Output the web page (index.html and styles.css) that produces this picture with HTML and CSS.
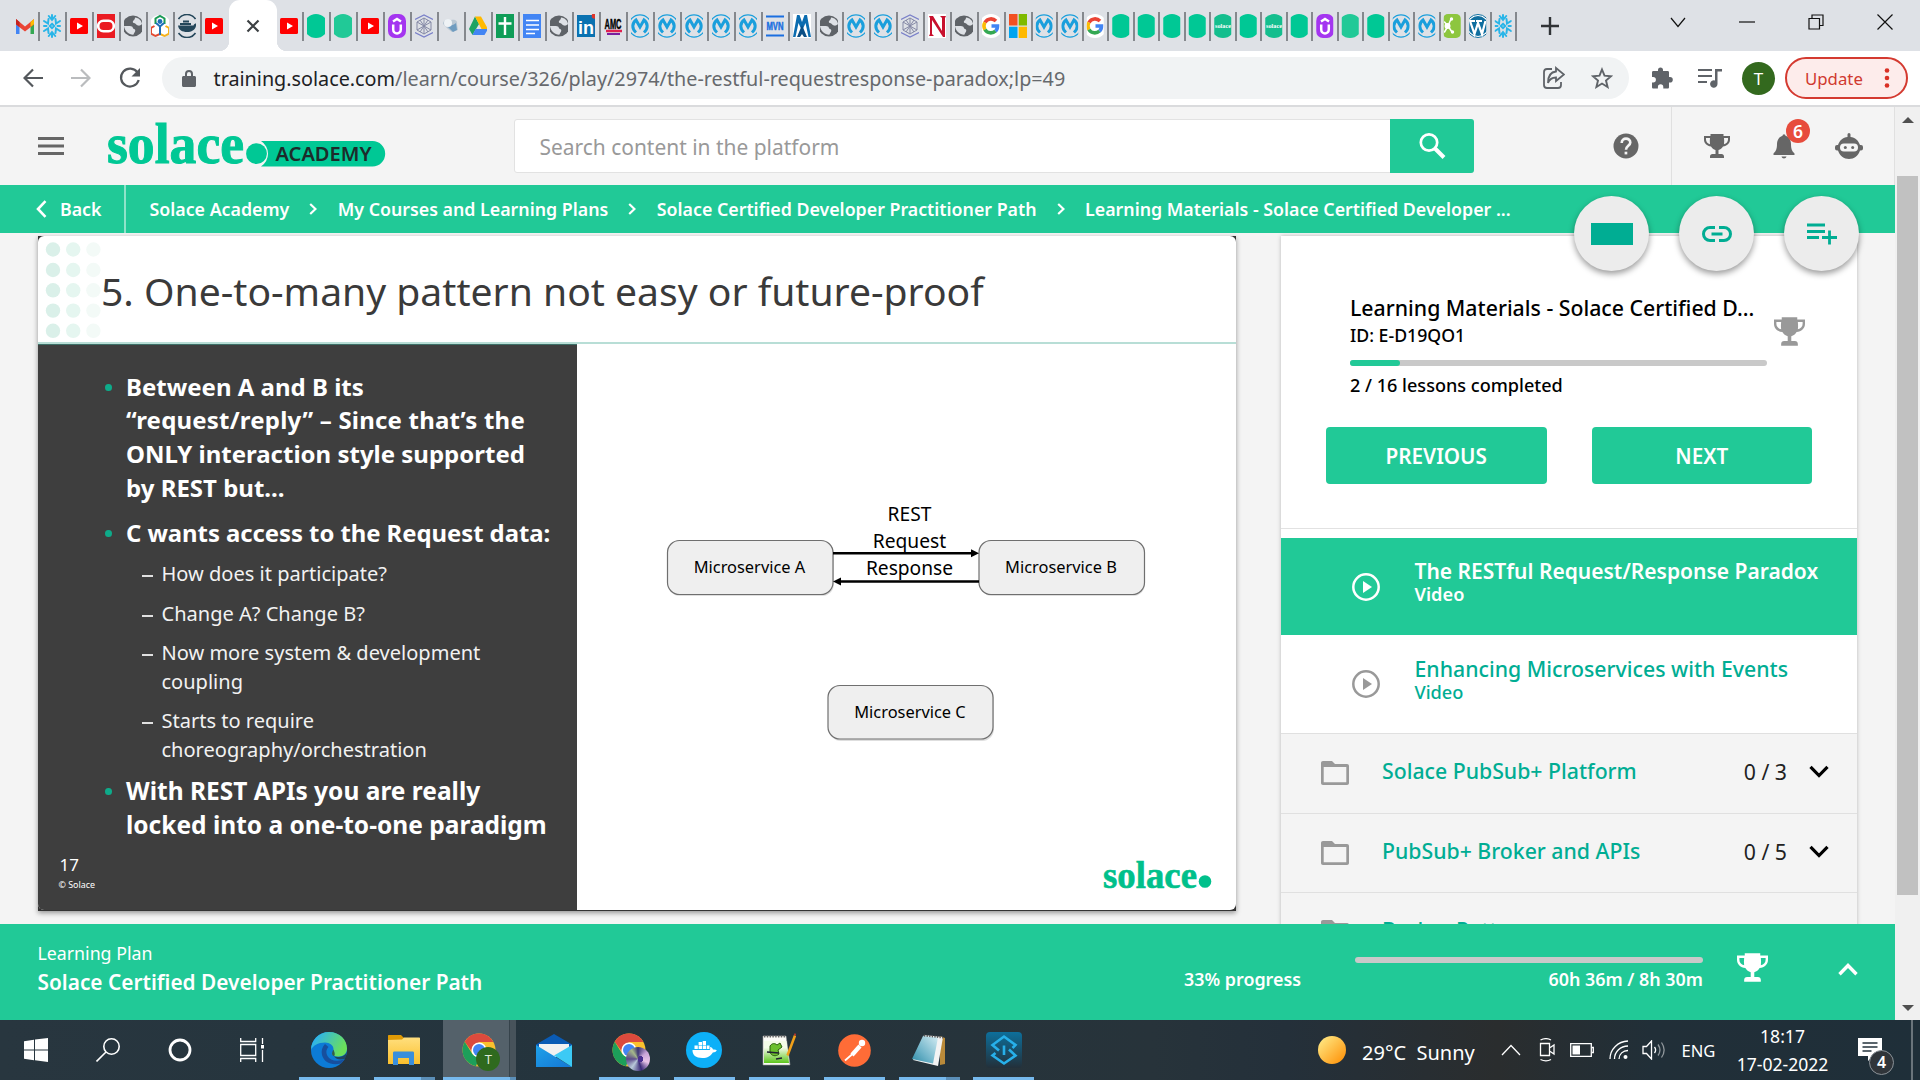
FILE: index.html
```html
<!DOCTYPE html>
<html lang="en">
<head>
<meta charset="utf-8">
<title>Solace Academy</title>
<link rel="stylesheet" href="styles.css">
</head>
<body>
<svg class="defs" aria-hidden="true">
  <defs>
    <linearGradient id="gSun" x1="0" y1="0" x2="1" y2="1"><stop offset="0.1" stop-color="#ffe680"/><stop offset="1" stop-color="#ff8c00"/></linearGradient>
    <linearGradient id="gEdgeTop" x1="0" y1="0" x2="1" y2="0.4"><stop offset="0.2" stop-color="#2fb4e9"/><stop offset="1" stop-color="#6be05a"/></linearGradient>
    <linearGradient id="gFolder" x1="0" y1="0" x2="0" y2="1"><stop offset="0" stop-color="#ffdf7e"/><stop offset="1" stop-color="#fbc02d"/></linearGradient>
    <linearGradient id="gMail" x1="0" y1="0" x2="1" y2="1"><stop offset="0" stop-color="#1fa2ea"/><stop offset="1" stop-color="#1477d4"/></linearGradient>
    <linearGradient id="gGrass" x1="0" y1="0" x2="0" y2="1"><stop offset="0.3" stop-color="#f4fbe8"/><stop offset="1" stop-color="#5cc51c"/></linearGradient>
    <linearGradient id="gPad" x1="1" y1="0" x2="0" y2="1"><stop offset="0" stop-color="#d4ecf3"/><stop offset="0.6" stop-color="#6fb4c9"/><stop offset="1" stop-color="#2c8aa6"/></linearGradient>
    <linearGradient id="gSync" x1="0" y1="0" x2="0" y2="1"><stop offset="0" stop-color="#0d6f9b"/><stop offset="1" stop-color="#23303a"/></linearGradient>
  </defs>
  <symbol id="f-gmail" viewBox="0 0 24 24"><path fill="#4285f4" d="M2.500 20V7l4 3.200V20z"/><path fill="#34a853" d="M17.500 20V10l4-3V20z"/><path fill="#ea4335" d="M2.500 4.500L12 12.500l9.500-8v5.500L12 17.500 2.500 10z"/><path fill="#c5221f" d="M2.500 4.500l4 3.400v5L2.500 10z"/><path fill="#fbbc04" d="M21.500 4.500l-4 3.400v5l4-3z"/></symbol>
  <symbol id="f-snow" viewBox="0 0 24 24"><g fill="none" stroke="#29b5e8" stroke-width="2" stroke-linecap="round"><path d="M12 9.800l2.200 2.200-2.200 2.200L9.800 12zM12 1v5M8.800 2L12 6l3.200-4M12 23v-5M8.800 22L12 18l3.200 4M4 7l4 2.500L8.500 5M20 7l-4 2.500-.5-4.500M4 17l4-2.500.5 4.500M20 17l-4-2.500-.5 4.500M4 12h2.500M20 12h-2.500"/></g></symbol>
  <symbol id="f-yt" viewBox="0 0 24 24"><rect x="3" y="4" width="18" height="16" rx="1.500" fill="#f00"/><path fill="#fff" d="M10 8.500v7l6-3.500z"/></symbol>
  <symbol id="f-oracle" viewBox="0 0 24 24"><rect width="24" height="24" fill="#ea1b22"/><rect x="4.200" y="6.800" width="15.600" height="10.400" rx="5.200" fill="none" stroke="#fff" stroke-width="2.600"/></symbol>
  <symbol id="f-globe" viewBox="0 0 24 24"><circle cx="12" cy="12" r="10.500" fill="#5f6368"/><path fill="#dee1e6" d="M14 3.500c4 .5 6.500 3 7 6.500-1.500 1.200-2.500 2-4 1.500-2 0-2-2.500-4-2.500-1.500-.2-1.500-1.500-.5-2.500.8-.8 1.500-1.500 1.500-3zM3 12c2 .3 5-.3 8 .5 1 .5.500 2 2 2.500 1.800.5 1.500 2.500.5 3.500-.8.8-.5 2-1.500 2.300C8 20.500 3.500 17 3 12z"/></symbol>
  <symbol id="f-tri" viewBox="0 0 24 24"><circle cx="12" cy="12" r="11" fill="#fff"/><g fill="none" stroke-width="2"><path stroke="#1a9a55" d="M7.500 10V4.500L12 2l4.500 2.500V10"/><path stroke="#e34b32" d="M12 20l-4.500 2-4.500-2.500V14l3.500-2"/><path stroke="#f6b21b" d="M12 20l4.500 2 4.500-2.500V14l-3.500-2"/><path stroke="#1e6fb8" d="M8 9l4 3.500L16 9M12 12.500V21"/></g><circle cx="12" cy="7.500" r="2.400" fill="#1e6fb8"/></symbol>
  <symbol id="f-dock" viewBox="0 0 24 24"><g fill="none" stroke="#24465a" stroke-width="1.600"><path d="M3.500 5C8-1 16-1 20.500 5M3.500 19c4.500 6 12.500 6 17 0"/></g><path fill="#24465a" d="M3 11.500h15.500c.5-1.500 1.500-2 2.500-2v2.500c-1 4-4.500 6-9 6s-8.500-2-9-6.500zM5 9h11v2H5zM8 6.500h6V8.500H8z"/></symbol>
  <symbol id="f-sol" viewBox="0 0 24 24"><circle cx="12" cy="12" r="12" fill="#00c895"/></symbol>
  <symbol id="f-sol2" viewBox="0 0 24 24"><circle cx="12" cy="12" r="12" fill="#21c997"/></symbol>
  <symbol id="f-udemy" viewBox="0 0 24 24"><rect x="3" width="18" height="24" rx="7" fill="#a435f0"/><path fill="none" stroke="#fff" stroke-width="2.500" d="M8.200 10.500v5c0 5.200 7.600 5.200 7.600 0v-5M8 7.500L12 5l4 2.500"/></symbol>
  <symbol id="f-poly" viewBox="0 0 24 24"><g fill="none" stroke="#8589a6"><path stroke="#7a80c9" stroke-width="1.300" d="M3 5.500L12 1l9 4.500M3 18.500L12 23l9-4.500"/><path d="M5 8l7-4 7 4v8l-7 4-7-4zM5 8l14 8M19 8L5 16M12 4v16M8 6l8 12M16 6L8 18"/></g></symbol>
  <symbol id="f-cloud" viewBox="0 0 24 24"><path fill="#b9c7d3" d="M4 10c0-4 5-6 8-4 4-1 7 1 6 4l1 6-6 2-4-3z"/><path fill="#6f9cc0" d="M6 10c4 2 8 2 11-1l1 7-4 2z"/><circle cx="9" cy="9" r="4" fill="#eef2f5"/></symbol>
  <symbol id="f-drive" viewBox="0 0 24 24"><path fill="#1ea362" d="M9 2.500l4 7.500-6.500 11-3.500-6z"/><path fill="#ffba00" d="M9 2.500h6L22 15h-6.500z"/><path fill="#4285f4" d="M9.500 15H22l-3.500 6h-12z"/></symbol>
  <symbol id="f-sheets" viewBox="0 0 24 24"><rect x="3" width="18" height="24" fill="#0f9d58"/><path stroke="#fff" stroke-width="2.400" d="M12 3v18M5.500 9.500h13"/></symbol>
  <symbol id="f-docs" viewBox="0 0 24 24"><rect x="3" width="18" height="24" fill="#4285f4"/><path stroke="#fff" stroke-width="1.700" d="M6 6.500h13M6 11h13M6 15.500h13M6 19.500h9"/></symbol>
  <symbol id="f-mule" viewBox="0 0 24 24"><circle cx="12" cy="12" r="11.200" fill="none" stroke="#1b9fdc" stroke-width="1.200"/><path fill="none" stroke="#1b9fdc" stroke-width="3" d="M8 18.500C3.500 14.500 4 9 8 6l4 7 4-7c4 3 4.500 8.500 0 12.500"/></symbol>
  <symbol id="f-mw" viewBox="0 0 24 24"><rect x="2" width="20" height="24" fill="#fff"/><path fill="#0b6cb0" d="M3 23L7 1h2.500L12 8l2.500-7H17l4 22h-2.500L15.500 9 12 17 8.500 9 5.500 23z"/><path fill="#0b4f86" d="M7 23l5-12 5 12h-3l-2-3-2 3z"/></symbol>
  <symbol id="f-n" viewBox="0 0 24 24"><rect x="2" width="20" height="24" fill="#fff"/><path fill="#c8102e" d="M4 2h4l9 15V4l-2-2h6l-1 2v19h-2L7 6v14l2 2H4l1-2V4z"/></symbol>
  <symbol id="f-g" viewBox="0 0 24 24"><circle cx="12" cy="12" r="12" fill="#fff"/><g fill="none" stroke-width="3.600"><path stroke="#ea4335" d="M6 8.500C8.500 4 14 4 17 7"/><path stroke="#fbbc05" d="M6 8.500c-1.200 2-1.200 5 0 7"/><path stroke="#34a853" d="M6 15.500c2.200 4 7.500 4.300 10.500 1.500"/><path stroke="#4285f4" d="M12.500 12h6c0 2-.7 4-2 5"/></g></symbol>
  <symbol id="f-ms" viewBox="0 0 24 24"><path fill="#f25022" d="M3 0h8.500v11.500H3z"/><path fill="#7fba00" d="M12.700 0H21v11.500h-8.300z"/><path fill="#00a4ef" d="M3 12.700h8.500V24H3z"/><path fill="#ffb900" d="M12.700 12.700H21V24h-8.300z"/></symbol>
  <symbol id="f-splash" viewBox="0 0 24 24"><rect x="3" width="18" height="24" rx="5" fill="#8dc63f"/><path stroke="#fff" stroke-width="1.500" stroke-linecap="round" d="M8 12L4.500 8M8 12l-3.500 6M8 12l3-7M8 12l4 6"/><circle cx="7.500" cy="12" r="3" fill="#fff"/><circle cx="11.500" cy="5" r="1.700" fill="#fff"/><circle cx="12.500" cy="18" r="1.700" fill="#fff"/></symbol>
  <symbol id="f-wp" viewBox="0 0 24 24"><circle cx="12" cy="12" r="11.500" fill="#fff" stroke="#0f6e9f"/><circle cx="12" cy="12" r="10" fill="#0f6e9f"/><path fill="none" stroke="#fff" stroke-width="2.200" d="M4 7l4.500 13L12 9l4 11 3.500-13M3 7h6M10 7h6"/></symbol>
  <symbol id="trophy" viewBox="0 0 26 24"><path fill="currentColor" d="M6.500 0h13v2H26v3.500c0 4-3 6.500-7 7-1.200 2-2.500 3-4.500 3.500V20h3c1.500 0 2.500 1 2.500 2.500V24H6v-1.500C6 21 7 20 8.500 20h3v-4c-2-.5-3.300-1.500-4.500-3.500-4-.5-7-3-7-7V2h6.500zM2 4v1.500c0 2.300 1.500 4 4 4.700C5.700 8 5.800 6 6 4zM20 4c.2 2 .3 4 0 6.200 2.500-.7 4-2.400 4-4.700V4z"/></symbol>
  <symbol id="folder" viewBox="0 0 28 24"><path fill="#999" fill-rule="evenodd" d="M2 0h9l3 3h12c1.200 0 2 .8 2 2v17c0 1.200-.8 2-2 2H2c-1.200 0-2-.8-2-2V2C0 .8.800 0 2 0zM2.700 6v15.300h22.600V6z"/></symbol>
  <symbol id="play" viewBox="0 0 28 28"><circle cx="14" cy="14" r="12.700" fill="none" stroke="currentColor" stroke-width="2.500"/><path fill="currentColor" d="M11 8v12l9-6z"/></symbol>
  <symbol id="chrome" viewBox="0 0 34 34"><circle cx="17" cy="17" r="16.500" fill="#fbc12d"/><path fill="#dc4a3d" d="M2.700 8.700A16.500 16.500 0 0 1 31.500 9H17L9.500 18z"/><path fill="#1d9f5a" d="M2.700 8.700l7.800 12.500 6.500 4-3 8A16.500 16.500 0 0 1 2.700 8.700z"/><circle cx="17" cy="17" r="7.600" fill="#fff"/><circle cx="17" cy="17" r="6" fill="#4285f4"/></symbol>
</svg>

<div class="tabstrip">
  <div class="tabs">
    <span class="tab"><svg><use href="#f-gmail"/></svg></span><span class="tab"><svg><use href="#f-snow"/></svg></span><span class="tab"><svg><use href="#f-yt"/></svg></span><span class="tab"><svg><use href="#f-oracle"/></svg></span><span class="tab"><svg><use href="#f-globe"/></svg></span><span class="tab"><svg><use href="#f-tri"/></svg></span><span class="tab"><svg><use href="#f-dock"/></svg></span><span class="tab last"><svg><use href="#f-yt"/></svg></span>
    <span class="tab-active"><svg width="14" height="14" viewBox="0 0 14 14"><path stroke="#3c4043" stroke-width="2.200" d="M1.500 1.500l11 11M12.500 1.500l-11 11"/></svg></span>
    <span class="tab"><svg><use href="#f-yt"/></svg></span><span class="tab"><svg><use href="#f-sol"/></svg></span><span class="tab"><svg><use href="#f-sol2"/></svg></span><span class="tab"><svg><use href="#f-yt"/></svg></span><span class="tab"><svg><use href="#f-udemy"/></svg></span><span class="tab"><svg><use href="#f-poly"/></svg></span><span class="tab"><svg><use href="#f-cloud"/></svg></span><span class="tab"><svg><use href="#f-drive"/></svg></span><span class="tab"><svg><use href="#f-sheets"/></svg></span><span class="tab"><svg><use href="#f-docs"/></svg></span><span class="tab"><svg><use href="#f-globe"/></svg></span>
    <span class="tab"><svg viewBox="0 0 24 24"><rect x="3" y="1" width="18" height="22" fill="#0a72b1"/><text x="12" y="19.500" text-anchor="middle" font-weight="700" font-size="18" fill="#fff">in</text><circle cx="20.500" cy="2" r="2.800" fill="#e0352b"/></svg></span>
    <span class="tab"><svg viewBox="0 0 24 24"><text x="3.500" y="14.500" font-weight="700" font-size="14" stroke="#000" stroke-width=".4" textLength="17" lengthAdjust="spacingAndGlyphs">AMC</text><path stroke="#e02050" stroke-width="2.500" d="M5 17h16"/><path stroke="#7a1fa0" stroke-width="2" d="M6 20h13"/></svg></span>
    <span class="tab"><svg><use href="#f-mule"/></svg></span><span class="tab"><svg><use href="#f-mule"/></svg></span><span class="tab"><svg><use href="#f-mule"/></svg></span><span class="tab"><svg><use href="#f-mule"/></svg></span><span class="tab"><svg><use href="#f-mule"/></svg></span>
    <span class="tab"><svg viewBox="0 0 24 24"><path stroke="#1a6fe0" stroke-width="1.800" d="M3 2.500h18M3 21.500h18"/><text x="3.500" y="16" font-weight="700" font-size="11" fill="#1a6fe0" stroke="#1a6fe0" stroke-width=".5" textLength="17" lengthAdjust="spacingAndGlyphs">MVN</text></svg></span>
    <span class="tab"><svg><use href="#f-mw"/></svg></span><span class="tab"><svg><use href="#f-globe"/></svg></span><span class="tab"><svg><use href="#f-mule"/></svg></span><span class="tab"><svg><use href="#f-mule"/></svg></span><span class="tab"><svg><use href="#f-poly"/></svg></span><span class="tab"><svg><use href="#f-n"/></svg></span><span class="tab"><svg><use href="#f-globe"/></svg></span><span class="tab"><svg><use href="#f-g"/></svg></span><span class="tab"><svg><use href="#f-ms"/></svg></span>
    <span class="tab slim"><svg><use href="#f-mule"/></svg></span><span class="tab slim"><svg><use href="#f-mule"/></svg></span><span class="tab slim"><svg><use href="#f-g"/></svg></span><span class="tab slim"><svg><use href="#f-sol"/></svg></span><span class="tab slim"><svg><use href="#f-sol"/></svg></span><span class="tab slim"><svg><use href="#f-sol"/></svg></span><span class="tab slim"><svg><use href="#f-sol"/></svg></span>
    <span class="tab slim"><svg viewBox="0 0 24 24"><circle cx="12" cy="12" r="12" fill="#14be8e"/><text class="serif" x="12" y="14" text-anchor="middle" font-size="6.200" fill="#fff">solace</text></svg></span>
    <span class="tab slim"><svg><use href="#f-sol"/></svg></span>
    <span class="tab slim"><svg viewBox="0 0 24 24"><circle cx="12" cy="12" r="12" fill="#14be8e"/><text class="serif" x="12" y="14" text-anchor="middle" font-size="6.200" fill="#fff">solace</text></svg></span>
    <span class="tab slim"><svg><use href="#f-sol"/></svg></span><span class="tab slim"><svg><use href="#f-udemy"/></svg></span><span class="tab slim"><svg><use href="#f-sol2"/></svg></span><span class="tab slim"><svg><use href="#f-sol"/></svg></span><span class="tab slim"><svg><use href="#f-mule"/></svg></span><span class="tab slim"><svg><use href="#f-mule"/></svg></span><span class="tab slim"><svg><use href="#f-splash"/></svg></span><span class="tab slim"><svg><use href="#f-wp"/></svg></span><span class="tab slim"><svg><use href="#f-snow"/></svg></span>
  </div>
  <svg class="newtab" width="18" height="18" viewBox="0 0 18 18"><path stroke="#303336" stroke-width="2.400" d="M9 0v18M0 9h18"/></svg>
  <div class="winctl">
    <svg width="16" height="16" viewBox="0 0 16 16"><path d="M1 4l7 8.500L15 4"/></svg>
    <svg width="16" height="16" viewBox="0 0 16 16"><path d="M0 8h16"/></svg>
    <svg width="16" height="16" viewBox="0 0 16 16"><path d="M1 4.500h10.500V15H1zM4 4.500V1h11v10.500h-3.500"/></svg>
    <svg width="16" height="16" viewBox="0 0 16 16"><path d="M.5.500l15 15M15.500.500l-15 15"/></svg>
  </div>
</div>

<div class="toolbar">
  <svg class="nav" width="20" height="20" viewBox="0 0 20 20"><path stroke="#54585c" d="M20 10H2M10 1.500L1.500 10l8.500 8.500"/></svg>
  <svg class="nav" width="20" height="20" viewBox="0 0 20 20"><path stroke="#babcbe" d="M0 10h18M10 1.500l8.500 8.500-8.500 8.500"/></svg>
  <svg class="nav reload" width="22" height="22" viewBox="0 0 22 22"><path stroke="#54585c" d="M18.500 5.500A9 9 0 1 0 19.700 13"/><path fill="#54585c" d="M21 1v8.500h-8.500z"/></svg>
  <div class="omnibox">
    <svg width="14" height="18" viewBox="0 0 14 18"><path fill="#5f6368" d="M1.500 7H3V5a4 4 0 0 1 8 0v2h1.500c.8 0 1.500.7 1.500 1.500v8c0 .8-.7 1.500-1.500 1.500h-11C.7 18 0 17.300 0 16.500v-8C0 7.700.7 7 1.500 7zM5 7h4V5a2 2 0 0 0-4 0z"/></svg>
    <span class="url"><b>training.solace.com</b>/learn/course/326/play/2974/the-restful-requestresponse-paradox;lp=49</span>
    <svg class="share" width="22" height="24" viewBox="0 0 22 24"><path fill="none" stroke="#5f6368" stroke-width="1.800" d="M9 3H4C2 3 1 4 1 6v13c0 2 1 3 3 3h11c2 0 3-1 3-3v-3M13 2l8 6.500-8 6.500v-3.500C9 11.500 6.500 13 5 17 5 11 7.500 6 13 5.500z"/></svg>
    <svg class="star" width="22" height="22" viewBox="0 0 22 22"><path fill="none" stroke="#5f6368" stroke-width="1.900" d="M11 2.500l2.500 6.200 6.500.5-5 4.300 1.600 6.500-5.600-3.500L5.400 20 7 13.500 2 9.200l6.500-.5z"/></svg>
  </div>
  <svg class="ext" width="22" height="22" viewBox="0 0 22 22"><path fill="#5f6368" d="M2.500 4H7V3a2.500 2.500 0 0 1 5 0v1h4.500C17.500 4 18 4.500 18 5.500V10h1a2.800 2.800 0 0 1 0 5.600h-1V20c0 1-.5 1.500-1.500 1.500h-4.200V20a2.700 2.700 0 0 0-5.400 0v1.500H2.500C1.500 21.500 1 21 1 20v-4.500h1.200a2.700 2.700 0 0 0 0-5.400H1V5.500C1 4.500 1.500 4 2.500 4z"/></svg>
  <svg class="music" width="24" height="20" viewBox="0 0 24 20"><path stroke="#5f6368" stroke-width="2.200" d="M0 2h14M0 8h14M0 14h9"/><path fill="#5f6368" d="M17 1h7v2.500h-4.500V16a3.700 3.700 0 1 1-2.500-3.500z"/></svg>
  <span class="avatar">T</span>
  <span class="update">Update <svg width="6" height="20" viewBox="0 0 6 20"><g fill="#d93025"><circle cx="3" cy="2.500" r="2.300"/><circle cx="3" cy="10" r="2.300"/><circle cx="3" cy="17.500" r="2.300"/></g></svg></span>
</div>

<div class="viewport">
  <div class="page">
    <header class="header">
      <svg class="burger" width="26" height="18" viewBox="0 0 26 18"><path stroke="#666" stroke-width="3" d="M0 1.500h26M0 9h26M0 16.500h26"/></svg>
      <svg class="logo" width="280" height="66" viewBox="0 -6 280 66"><text class="serif" x="0" y="44.200" font-size="57" fill="#00c895" stroke="#00c895" stroke-width="1" textLength="137" lengthAdjust="spacingAndGlyphs">solace</text><path fill="#00c895" d="M154 22h111.500a12.700 12.700 0 0 1 0 25.400H154a15 15 0 0 0 0-25.400z"/><circle cx="149.500" cy="34.700" r="10.400" fill="#00c895"/><text x="168.500" y="42" font-family="Noto Sans, sans-serif" font-weight="600" font-size="19.500" fill="#1d2b2b" textLength="96" lengthAdjust="spacingAndGlyphs">ACADEMY</text></svg>
      <div class="search"><span>Search content in the platform</span><button><svg width="28" height="28" viewBox="0 0 28 28"><g fill="none" stroke="#fff"><circle cx="11" cy="10.500" r="8.200" stroke-width="2.700"/><path stroke-width="4" d="M17 16.500l9 9"/></g></svg></button></div>
      <svg class="help" width="26" height="26" viewBox="0 0 26 26"><circle cx="13" cy="13" r="12.500" fill="#666"/><path fill="none" stroke="#f4f4f4" stroke-width="2.600" d="M8.700 10c0-6 8.600-5.500 8.600-.5 0 3.200-4.300 3.500-4.300 7.200"/><path fill="#f4f4f4" d="M11.600 18.700h2.700v2.700h-2.700z"/></svg>
      <div class="tools">
        <svg width="26" height="24"><use href="#trophy"/></svg>
        <span class="bell"><svg width="22" height="25" viewBox="0 0 22 25"><path fill="#666" d="M9.500 1.800a1.500 1.500 0 0 1 3 0C16 3 18 6 18 10c0 5 1 7 3.500 9.500V21H.5v-1.500C3 17 4 15 4 10c0-4 2-7 5.500-8.200zM8.500 22.500h5c-.5 2.500-4.500 2.500-5 0z"/></svg><span class="badge">6</span></span>
        <svg width="28" height="26" viewBox="0 0 28 26"><path fill="#666" d="M12.500 1.500a1.500 1.500 0 0 1 3 0V4c4.500.5 8 3.500 9.500 8h1a2 2 0 0 1 2 2v1.500a2 2 0 0 1-2 2h-1C23.500 22.500 19 26 14 26S4.500 22.500 3 17.500H2a2 2 0 0 1-2-2V14a2 2 0 0 1 2-2h1c1.500-4.500 5-7.500 9.500-8z"/><rect x="5" y="10.500" width="18" height="8" rx="4" fill="#f4f4f4"/><circle cx="10.300" cy="14.500" r="1.500" fill="#666"/><circle cx="17.700" cy="14.500" r="1.500" fill="#666"/></svg>
      </div>
    </header>

    <nav class="crumbs">
      <a class="back"><svg width="11" height="18" viewBox="0 0 11 18"><path d="M9.500 1.200L2 9l7.500 7.800" stroke-width="2.600"/></svg>Back</a>
      <a>Solace Academy</a><svg width="8" height="12" viewBox="0 0 8 12"><path d="M1.200 1L6.500 6l-5.300 5"/></svg>
      <a>My Courses and Learning Plans</a><svg width="8" height="12" viewBox="0 0 8 12"><path d="M1.200 1L6.500 6l-5.300 5"/></svg>
      <a>Solace Certified Developer Practitioner Path</a><svg width="8" height="12" viewBox="0 0 8 12"><path d="M1.200 1L6.500 6l-5.300 5"/></svg>
      <a>Learning Materials - Solace Certified Developer ...</a>
    </nav>

    <main class="main">
      <div class="slide-box">
        <section class="slide">
          <div class="slide-head">
            <svg class="dots" width="56" height="96" viewBox="0 0 56 96"><g fill="#daf0e9"><circle cx="8" cy="7.500" r="7.200"/><circle cx="8" cy="28" r="7.200"/><circle cx="8" cy="48.300" r="7.200"/><circle cx="8" cy="68.600" r="7.200"/><circle cx="8" cy="88.800" r="7.200"/></g><g fill="#e5f6f0"><circle cx="28.200" cy="7.500" r="7.200"/><circle cx="28.200" cy="28" r="7.200"/><circle cx="28.200" cy="48.300" r="7.200"/><circle cx="28.200" cy="68.600" r="7.200"/><circle cx="28.200" cy="88.800" r="7.200"/></g><g fill="#f3faf7"><circle cx="48.400" cy="7.500" r="7.200"/><circle cx="48.400" cy="28" r="7.200"/><circle cx="48.400" cy="48.300" r="7.200"/><circle cx="48.400" cy="68.600" r="7.200"/><circle cx="48.400" cy="88.800" r="7.200"/></g></svg>
            <h1>5. One-to-many pattern not easy or future-proof</h1>
          </div>
          <div class="slide-body">
            <div class="points">
              <ul>
                <li>Between A and B its<br><span class="loose">“request/reply” – Since that’s the</span><br>ONLY interaction style supported<br>by REST but...</li>
                <li class="tight">C wants access to the Request data:</li>
              </ul>
              <ul class="sub">
                <li>How does it participate?</li>
                <li>Change A? Change B?</li>
                <li>Now more system &amp; development<br>coupling</li>
                <li>Starts to require<br>choreography/orchestration</li>
              </ul>
              <ul>
                <li class="wide">With REST APIs you are really<br>locked into a one-to-one paradigm</li>
              </ul>
              <footer><span class="num">17</span><span class="copy">© Solace</span></footer>
            </div>
            <svg class="diagram" width="659" height="566" viewBox="577 344 659 566">
              <g fill="#dedede"><rect x="668" y="542" width="166" height="54" rx="12"/><rect x="980" y="542" width="165" height="54" rx="12"/><rect x="829" y="687" width="165" height="54" rx="12"/></g>
              <g fill="#efefef" stroke="#6f6f6f" stroke-width="1.200"><rect x="667.500" y="540.500" width="165.500" height="54" rx="12"/><rect x="979" y="540.500" width="165.500" height="54" rx="12"/><rect x="828" y="685.500" width="165" height="53.500" rx="12"/></g>
              <g stroke="#000" stroke-width="2.600"><path d="M833 553.200h140M979 581.500H839"/></g>
              <path d="M971 549.200l8 4-8 4zM841 577.500l-8 4 8 4z"/>
              <g class="node-label"><text x="749.500" y="573">Microservice A</text><text x="1061" y="573">Microservice B</text><text x="910" y="718.300">Microservice C</text></g>
              <g class="edge-label"><text x="909.500" y="520.500">REST</text><text x="909.500" y="547.500">Request</text><text x="909.500" y="574.500">Response</text></g>
              <text class="serif" x="1103" y="887.500" font-size="37" fill="#00c08b" stroke="#00c08b" stroke-width=".6" textLength="94" lengthAdjust="spacingAndGlyphs">solace</text><circle cx="1205" cy="881.500" r="6.300" fill="#00c08b"/>
            </svg>
          </div>
        </section>
      </div>

      <aside class="side">
        <div class="course">
          <div class="course-info">
            <h2>Learning Materials - Solace Certified D...</h2>
            <p class="cid">ID: E-D19QO1</p>
            <div class="bar"><i style="width:12%"></i></div>
            <p>2 / 16 lessons completed</p>
          </div>
          <svg class="t2" width="31" height="29"><use href="#trophy"/></svg>
        </div>
        <div class="buttons"><button>PREVIOUS</button><button>NEXT</button></div>
        <div class="lessons">
          <div class="lesson on"><svg width="28" height="28"><use href="#play"/></svg><div><b>The RESTful Request/Response Paradox</b><small>Video</small></div></div>
          <div class="lesson"><svg width="28" height="28"><use href="#play"/></svg><div><b>Enhancing Microservices with Events</b><small>Video</small></div></div>
        </div>
        <div class="chapter"><svg width="28" height="24"><use href="#folder"/></svg><b>Solace PubSub+ Platform</b><span>0 / 3</span><svg width="20" height="13" viewBox="0 0 20 13"><path fill="none" stroke="#000" stroke-width="3.200" d="M1.500 1.800L10 10.500l8.500-8.700"/></svg></div>
        <div class="chapter"><svg width="28" height="24"><use href="#folder"/></svg><b>PubSub+ Broker and APIs</b><span>0 / 5</span><svg width="20" height="13" viewBox="0 0 20 13"><path fill="none" stroke="#000" stroke-width="3.200" d="M1.500 1.800L10 10.500l8.500-8.700"/></svg></div>
        <div class="chapter"><svg width="28" height="24"><use href="#folder"/></svg><b>Broker Patterns</b></div>
      </aside>
    </main>

    <div class="fabs">
      <span class="fab"><i class="block"></i></span>
      <span class="fab"><svg width="30" height="16" viewBox="0 0 30 16"><path fill="none" stroke="#00ad93" stroke-width="3" d="M13 1.500H8a6.500 6.500 0 0 0 0 13h5M17 1.500h5a6.500 6.500 0 0 1 0 13h-5M9.500 8h11"/></svg></span>
      <span class="fab"><svg width="30" height="22" viewBox="0 0 30 22"><path stroke="#00ad93" stroke-width="2.800" d="M0 2h18M0 8.500h18M0 14.500h12M15 14.500h15M22.500 7.500v14"/></svg></span>
    </div>

    <footer class="plan">
      <div class="plan-name"><span>Learning Plan</span><b>Solace Certified Developer Practitioner Path</b></div>
      <b class="pct">33% progress</b>
      <div class="plan-bar"><i></i><b>60h 36m / 8h 30m</b></div>
      <svg class="t3" width="31" height="29"><use href="#trophy"/></svg>
      <svg class="up" width="20" height="13" viewBox="0 0 20 13"><path fill="none" stroke="#fff" stroke-width="3.400" d="M1.500 11.200L10 2.500l8.500 8.700"/></svg>
    </footer>
  </div>
  <div class="scroll"><i class="arrow-up"></i><i class="thumb"></i><i class="arrow-down"></i></div>
</div>

<div class="taskbar">
  <div class="sys">
    <span><svg width="24" height="24" viewBox="0 0 24 24"><path fill="#fff" d="M0 3.300l10-1.500v9.700H0zM11 1.600L24 0v11.500H11zM0 12.500h10v9.700L0 20.700zM11 12.500h13V24l-13-1.700z"/></svg></span>
    <span><svg width="24" height="24" viewBox="0 0 24 24"><g fill="none" stroke="#fff" stroke-width="1.600"><circle cx="15.500" cy="8.500" r="7.700"/><path d="M10 14L.5 23.500"/></g></svg></span>
    <span><svg width="24" height="24" viewBox="0 0 24 24"><circle cx="12" cy="12" r="10" fill="none" stroke="#fff" stroke-width="2.800"/></svg></span>
    <span><svg width="24" height="24" viewBox="0 0 24 24"><path fill="none" stroke="#fff" stroke-width="1.300" d="M.7 6.500h15v11H.7zM.7 0v3.500h15V0M.7 24v-3.500h15V24M22.500 0v6M22.500 12v12"/><path fill="#fff" d="M21 7h3v3.500h-3z"/></svg></span>
  </div>
  <div class="apps">
    <span class="app run"><svg width="36" height="36" viewBox="0 0 36 36"><circle cx="18" cy="18" r="18" fill="#0c7bd6"/><path fill="url(#gEdgeTop)" d="M0 18C0 8 8 0 18 0c11 0 18 8 18 16.500 0 5-3.500 8-8.500 8-4 0-6.500-1-6.500-3 0-1.500 1.500-2 1.500-4.500 0-3.500-3.500-6.500-8.500-6.500C7 10.500 1.500 14 0 18z"/><path fill="#174f9d" d="M14 12c-3 3-4 7-3 11 2 7 9 11 19 8.500l4-4.500c-7 3-15 2-17.500-3-2-4-1-7 1-9z"/><path fill="#24333c" d="M36 18.500c-.5 4-4 6.500-9 6.500-4 0-6-1.500-6-3.500 0-1.500 1-2.500 1.200-4 2 3 2 7 .5 6.500 2.300 4 8.300 4 11.800 2.500z" opacity=".75"/></svg></span>
    <span class="app run more"><svg width="32" height="30" viewBox="0 0 32 30"><path fill="#e09a05" d="M0 1c0-.6.400-1 1-1h12l3 3v5H0z"/><path fill="url(#gFolder)" d="M0 5l14-.5 2-2h15c.6 0 1 .4 1 1v25.500H0z"/><path fill="#3b8fdc" d="M5 18c0-1 .5-1.500 1.500-1.500h18c1 0 1.500.5 1.500 1.500v12h-5v-7H10v7H5z"/></svg></span>
    <span class="app run active more"><span class="stack"><svg width="34" height="34"><use href="#chrome"/></svg><i class="who">T</i></span></span>
    <span class="app"><svg width="36" height="33" viewBox="0 0 36 33"><path fill="#0a5bb5" d="M0 10.500L18 0l18 10.500V20H0z"/><path fill="#f1f1f1" d="M3 10h30v5L18 24 3 15z"/><path fill="url(#gMail)" d="M0 11l36 22H0z"/><path fill="#3ccaf5" d="M36 11v22L18 21.500z"/></svg></span>
    <span class="app run"><span class="stack"><svg width="34" height="34"><use href="#chrome"/></svg><i class="who pic"></i></span></span>
    <span class="app run"><svg width="36" height="36" viewBox="0 0 36 36"><circle cx="18" cy="18" r="18" fill="#0db0f8"/><path fill="#fff" d="M6.500 18h17c.5 0 1-1 .5-3 1.500.2 2.500 1.200 3 2.500 1.500-.3 3 0 3.800.8-.8 1.700-2 2.200-4 2.200-2 3.500-5 5.500-10.500 5.500-6.500 0-10-3-9.800-8zM8.500 13.500h3.300v3.500H8.500zM12.600 13.500H16v3.500h-3.400zM16.700 13.500H20v3.500h-3.300zM12.600 10H16v3h-3.400zM16.700 9H20v4h-3.300zM20.700 13.500h2.800v3.500h-2.800z"/></svg></span>
    <span class="app run"><svg width="34" height="34" viewBox="0 0 34 34"><path fill="#fbfbf6" stroke="#999" stroke-width=".6" d="M1 3h23l4 29H1z"/><path stroke="#666" stroke-width="2" stroke-dasharray="1.400 1.400" d="M2 3.500h22"/><path fill="url(#gGrass)" d="M2 8h22.500l2.500 22H2z"/><path fill="#6bbf2d" stroke="#2b5f0c" d="M8 13c2-3 5-3 7-1l3-2 2 4-4 3 1 4c-3 3-8 2-9-2z"/><path stroke="#223" stroke-width="1.500" d="M5 19l12 1M14 26l6-1"/><path stroke="#f0a01a" stroke-width="2.600" d="M33 2.500l-7.500 20"/><path stroke="#b0372c" stroke-width="2.600" d="M33.700.7L33 2.500"/></svg></span>
    <span class="app run"><svg width="33" height="33" viewBox="0 0 33 33"><circle cx="16.500" cy="16.500" r="16.300" fill="#ff6c37"/><circle cx="24" cy="9" r="3.200" fill="#fff"/><path stroke="#fff" stroke-width="4.200" d="M22 12l-8 9"/><path stroke="#fff" stroke-width="1.700" d="M14.500 20L7 26.500"/></svg></span>
    <span class="app run more"><svg width="34" height="32" viewBox="0 0 34 32"><path fill="#b98a3a" d="M28 2l5 2v26l-5 1z"/><path fill="#f3f3f3" d="M12 1l19 2-5 29L1 26z"/><path fill="url(#gPad)" d="M11 2l15 1.500-5 26L0 25z"/><path stroke="#555" stroke-width="2" stroke-dasharray="1.300 1.300" d="M12 1.500l19 2"/></svg></span>
    <span class="app run"><svg width="36" height="36" viewBox="0 0 36 36"><rect width="36" height="36" rx="4" fill="url(#gSync)"/><g fill="none" stroke="#27b0ea" stroke-width="2.600"><path d="M13 18.500L6.500 13 18 4.500 29.500 13l-3 3M23 17.500l6.500 6L18 31.500 6.500 23.500l3-2.500M18 13.500v9.500"/></g></svg></span>
  </div>
  <div class="tray">
    <svg class="sun" width="28" height="28" viewBox="0 0 28 28"><circle cx="14" cy="14" r="14"/></svg>
    <span class="weather">29°C&nbsp; Sunny</span>
    <svg class="i1" width="20" height="12" viewBox="0 0 20 12"><path d="M1 11l9-9.500L19 11"/></svg>
    <svg class="i2" width="18" height="24" viewBox="0 0 18 24"><path d="M2.500 5.500h9v12h-9zM11.500 10l4.500-3v9l-4.500-3M2.500 2C6 .3 10 .3 13 2M2.500 21.500c3.500 1.700 7.500 1.700 10.500 0"/></svg>
    <svg class="i3" width="24" height="14" viewBox="0 0 24 14"><path d="M.7.700h20.600v12.600H.7zM22 4.500h1.300v5H22"/><path class="solid" d="M2.500 2.500h7.500v9H2.500z"/></svg>
    <svg class="i4" width="20" height="20" viewBox="0 0 20 20"><path d="M1 19C1 9 9 1.500 19 1M5.500 19c0-7.500 6-13 13.500-13M10 19c0-5 4-8.500 9-8.500"/><circle class="solid" cx="16.500" cy="17" r="2"/></svg>
    <svg class="i5" width="23" height="20" viewBox="0 0 23 20"><path d="M1 6.500h3.500L9.500 1v18L4.500 13.500H1zM12.500 7c1.500 2 1.500 4 0 6"/><path opacity=".5" d="M16 4.500c2.500 3.500 2.500 7.500 0 11M19.500 2.500c3.500 5 3.500 10 0 15"/></svg>
    <span class="lang">ENG</span>
    <span class="clock"><span>18:17</span><span>17-02-2022</span></span>
    <span class="note"><svg width="24" height="24" viewBox="0 0 24 24"><path fill="#fff" d="M0 0h24v18H15l-5 5v-5H0z"/><path stroke="#24333c" stroke-width="1.400" d="M4.500 5h15M4.500 9h15M4.500 13h9"/></svg><i>4</i></span>
    <span class="peek"></span>
  </div>
</div>
</body>
</html>
```
FILE: styles.css
```css
* { box-sizing: border-box; margin: 0; padding: 0; }
body { width: 1920px; height: 1080px; overflow: hidden; display: flex; flex-direction: column; font-family: "Noto Sans", "Open Sans", sans-serif; background: #f4f4f4; }
i { font-style: normal; }
button { border: 0; font: inherit; color: #fff; background: #21c997; }
.defs { position: absolute; width: 0; height: 0; }
.serif { font-family: "Liberation Serif", serif; font-weight: 700; }

/* Browser tab strip */
.tabstrip { flex: none; height: 51px; background: #dee1e6; display: flex; align-items: center; }
.tabs { display: flex; height: 51px; padding-left: 12.500px; }
.tab { width: 27px; height: 29px; margin-top: 12px; border-right: 2px solid #85888d; display: flex; align-items: flex-start; justify-content: center; padding-top: 2px; font-family: "Liberation Sans", sans-serif; }
.tab svg { width: 24px; height: 24px; flex: none; margin: 0 -3px; clip-path: inset(0 3px); }
.tab.last { border-right-color: transparent; }
.tab.slim { width: 25.5px; }
.tab.slim svg { clip-path: inset(0 3.500px); }
.tab-active { position: relative; width: 48px; height: 51px; background: #fff; border-radius: 11px 11px 0 0; display: flex; align-items: center; justify-content: center; }
.tab-active::before, .tab-active::after { content: ""; position: absolute; bottom: 0; width: 10px; height: 10px; }
.tab-active::before { right: 100%; background: radial-gradient(circle at 0 0, transparent 10px, #fff 10.500px); }
.tab-active::after { left: 100%; background: radial-gradient(circle at 100% 0, transparent 10px, #fff 10.500px); }
.newtab { margin-left: 23.500px; }
.winctl { margin-left: auto; margin-right: 27px; display: flex; gap: 53px; height: 16px; margin-top: -8px; }
.winctl path { fill: none; stroke: #111; stroke-width: 1.200; }

/* Browser toolbar */
.toolbar { flex: none; height: 56px; background: #fff; border-bottom: 2px solid #dadbdd; display: flex; align-items: center; padding-left: 22.500px; padding-right: 12px; }
.nav { margin-right: 28px; fill: none; stroke-width: 2.200; }
.nav.reload { margin-right: 21.500px; }
.omnibox { width: 467px; flex: 1; height: 42px; border-radius: 21px; background: #f1f3f4; display: flex; align-items: center; padding: 0 16px 0 20px; }
.url { flex: 1; margin-left: 17.500px; font-size: 19.770px; color: #66696d; white-space: nowrap; }
.url b { font-weight: 400; color: #202124; }
.share { margin-right: 26px; }
.ext { margin-left: 22px; }
.music { margin-left: 25px; }
.avatar { width: 33px; height: 33px; margin-left: 20px; border-radius: 50%; background: #33691e; color: #fff; font-size: 17px; display: flex; align-items: center; justify-content: center; }
.update { width: 123px; height: 42px; margin-left: 10px; border: 2px solid #d43a30; border-radius: 21px; background: #fdeceb; color: #d0392f; font-size: 16.800px; display: flex; align-items: center; padding-left: 18px; }
.update svg { margin-left: 21px; }

/* Page */
.viewport { flex: none; height: 913px; display: flex; }
.page { position: relative; width: 1895px; height: 913px; display: flex; flex-direction: column; background: #f4f4f4; }
.header { flex: none; height: 78px; display: flex; align-items: center; padding-left: 38px; border-right: 1px solid #e0e0e0; }
.logo { margin-left: 42.500px; }
.search { width: 960px; height: 54px; margin-left: 127.500px; border: 1px solid #e2e2e2; border-radius: 3px; background: #fff; display: flex; align-items: center; }
.search span { flex: 1; padding: 1.500px 0 0 24.500px; font-size: 20.940px; color: #999; }
.search button { width: 84px; height: 54px; border-radius: 0 3px 3px 0; margin-right: -1px; display: flex; align-items: center; justify-content: center; }
.help { margin-left: 138.500px; }
.tools { flex: 1; height: 78px; margin-left: 32.500px; border-left: 1px solid #e0e0e0; display: flex; align-items: center; color: #666; padding-left: 32px; }
.bell { position: relative; margin: 0 40px 0 42.500px; height: 25px; }
.badge { position: absolute; left: 13.500px; top: -15px; width: 24px; height: 24px; border-radius: 50%; background: #e74c3c; color: #fff; font-weight: 600; font-size: 17.500px; line-height: 24px; text-align: center; }

.crumbs { flex: none; height: 48px; background: #21c997; display: flex; align-items: center; color: #fff; font-weight: 600; font-size: 17.800px; line-height: 48px; white-space: nowrap; }
.crumbs svg { fill: none; stroke: #fff; stroke-width: 2.200; }
.crumbs a { margin-left: 20.500px; }
.crumbs a + svg { margin-left: 20px; }
.crumbs .back { width: 126px; height: 48px; margin: 0; padding-left: 36px; border-right: 2px solid #8fe3c9; display: flex; align-items: center; gap: 13px; }
.crumbs .back + a { margin-left: 23.500px; }

.main { flex: none; height: 691px; overflow: hidden; display: flex; padding: 3px 0 0 38px; }
.slide-box { flex: none; width: 1198px; height: 675px; background: #333; box-shadow: 0 2px 5px rgba(0,0,0,.4); }
.slide { height: 674px; border-radius: 6px; overflow: hidden; background: #fff; }
.slide-head { height: 108px; display: flex; align-items: flex-start; padding: 6px 0 0 7px; border-bottom: 2px solid #b8ded6; }
.slide-head h1 { margin-left: 0; margin-top: 19px; font-weight: 400; font-size: 39.080px; line-height: 60px; color: #3a3a3a; white-space: nowrap; }
.slide-body { display: flex; height: 566px; }
.points { width: 539.500px; background: #3e3e3e; border-top: 1px solid #3d7068; padding: 24.500px 0 0 88px; color: #fff; }
.points ul { list-style: none; }
.points li { position: relative; font-weight: 700; font-size: 24px; line-height: 33.800px; margin-bottom: 11.600px; white-space: nowrap; }
.points .loose { letter-spacing: .2px; }
.points li.tight { font-size: 23.900px; letter-spacing: -.05px; margin-bottom: 10px; }
.points li.wide { font-size: 24.500px; }
.points li::before { content: ""; position: absolute; left: -21px; top: 14px; width: 6.500px; height: 7px; border-radius: 50%; background: #0eab8a; }
.points .sub li { margin-left: 35.500px; font-weight: 400; font-size: 20.050px; line-height: 28.300px; margin-bottom: 11.400px; color: #f2f2f2; }
.points .sub li::before { width: 11px; height: 2px; left: -20px; top: 15px; border-radius: 0; background: #e0e0e0; }
.points .sub li:last-child { margin-bottom: 10px; }
.points footer { margin: 10px 0 0 -67.500px; display: flex; flex-direction: column; }
.num { font-size: 17px; line-height: 24px; padding-left: 1px; }
.copy { font-size: 8.900px; line-height: 15px; }
.diagram { flex: none; }
.node-label, .edge-label { text-anchor: middle; font-family: "Noto Sans", sans-serif; }
.node-label { font-size: 16.400px; }
.edge-label { font-size: 19.200px; }

/* Course panel */
.side { flex: none; width: 576px; height: 760px; margin-left: 45px; background: #fff; box-shadow: 0 0 4px rgba(0,0,0,.25); }
.course { height: 191px; padding: 56px 0 0 69px; display: flex; font-weight: 500; font-size: 18.080px; line-height: 24px; }
.course-info { width: 417px; }
.course h2 { font-weight: 500; font-size: 21.280px; line-height: 32px; white-space: nowrap; }
.course .cid { font-size: 17.700px; line-height: 24px; margin-top: -1px; }
.bar { height: 6px; margin: 13px 0 7px; background: #c9c9c9; border-radius: 3px; display: flex; }
.bar i { background: #21c997; border-radius: 3px; }
.t2 { margin: 25px 0 0 7px; color: #999; }
.buttons { height: 102px; padding: 0 45px; display: flex; justify-content: space-between; border-bottom: 1px solid #e2e2e2; }
.buttons button { width: 220.500px; height: 57px; border-radius: 4px; font-weight: 600; font-size: 20.700px; line-height: 58px; }
.lessons { padding-top: 9px; }
.lesson { height: 98px; display: flex; padding-left: 71px; color: #00ad93; }
.lesson svg { margin: 34.500px 34.500px 0 0; color: #999; flex: none; }
.lesson b, .lesson small { display: block; font-weight: 500; white-space: nowrap; }
.lesson b { font-size: 21.280px; line-height: 26px; margin-top: 21px; }
.lesson small { font-size: 18.200px; line-height: 21px; }
.lesson.on { height: 97px; background: #21c997; color: #fff; }
.lesson.on svg { color: #fff; }
.lesson.on b, .lesson.on small { font-weight: 600; }
.lesson.on b { font-size: 21px; margin-top: 20px; }
.chapter { height: 79.500px; background: #f4f4f4; border-top: 1px solid #e0e0e0; display: flex; align-items: center; padding: 0 28px 0 40px; font-size: 21.250px; }
.chapter b { flex: 1; margin-left: 33px; font-weight: 500; color: #00ad93; margin-top: -5px; }
.chapter span { color: #222; font-weight: 400; margin: -3px 22px 0 0; }
.chapter svg:last-child { margin-top: -3.500px; }

.fabs { position: absolute; left: 1574px; top: 89px; display: flex; gap: 30px; }
.fab { width: 75px; height: 75px; border-radius: 50%; background: #ececec; box-shadow: 0 3px 6px rgba(0,0,0,.4); display: flex; align-items: center; justify-content: center; }
.block { width: 42px; height: 22px; background: #00ad93; }

.plan { flex: none; height: 96px; background: #21c997; color: #fff; display: flex; position: relative; padding-left: 37.500px; }
.plan-name { width: 1146.500px; padding-top: 15px; display: flex; flex-direction: column; }
.plan-name span { font-size: 17.750px; line-height: 28px; }
.plan-name b { font-weight: 600; font-size: 20.830px; line-height: 30px; }
.pct { width: 171px; margin-top: 43px; font-weight: 600; font-size: 17.900px; line-height: 24px; }
.plan-bar { width: 348px; padding-top: 33px; display: flex; flex-direction: column; text-align: right; }
.plan-bar i { height: 6px; border-radius: 3px; background: #c9c9c9; }
.plan-bar b { margin-top: 4px; font-weight: 600; font-size: 17.900px; line-height: 24px; }
.t3 { margin: 29px 0 0 34px; }
.up { margin: 38.500px 0 0 70px; }

.scroll { width: 25px; background: #f0f0f0; display: flex; flex-direction: column; align-items: center; }
.scroll i { flex: none; }
.arrow-up { margin-top: 10px; border: 6px solid transparent; border-top: 0; border-bottom: 6px solid #505050; }
.thumb { width: 21px; height: 719px; margin-top: 53px; background: #c1c1c1; }
.arrow-down { margin-top: auto; margin-bottom: 9px; border: 6px solid transparent; border-bottom: 0; border-top: 6px solid #505050; }

/* Taskbar */
.taskbar { flex: none; height: 60px; background: linear-gradient(90deg, #28363f 0%, #24343d 30%, #27333a 60%, #24303a 67%, #2a2d2e 78%, #212f38 86%, #1f2f39 100%); display: flex; color: #fff; }
.sys { display: flex; }
.sys span { width: 72px; display: flex; align-items: center; justify-content: center; }
.apps { display: flex; margin-left: 4px; }
.app { position: relative; width: 74.950px; height: 60px; display: flex; align-items: center; justify-content: center; }
.app.run::after { content: ""; position: absolute; left: 7px; bottom: 0; width: 61px; height: 3px; background: #76b9ed; }
.app.more::after { background: linear-gradient(90deg, #76b9ed 47px, #5b8fb8 47px); }
.app.active { background: linear-gradient(90deg, transparent 1px, #54616a 1px, #54616a 67px, #36434b 67px, #36434b 68px, #47535b 68px, #47535b 74px, transparent 74px); }
.app.active::after { left: 1px; width: 73px; background: linear-gradient(90deg, #76b9ed 67px, #5b8fb8 67px); }
.stack { position: relative; height: 34px; }
.who { position: absolute; left: 14px; top: 14px; width: 24px; height: 24px; border-radius: 50%; background: #2f6a1e; font-size: 13px; line-height: 24px; text-align: center; color: #dfe9da; }
.who.pic { background: radial-gradient(circle at 60% 50%, #4a2f8f 15%, transparent 16%), conic-gradient(#3b3473, #c9a4d8, #e9c4e8 30%, #3a2a78 45%, #b9c9d9 60%, #5b4a8a 75%, #a5b88a 90%, #3b3473); }
.tray { margin-left: auto; display: flex; align-items: center; }
.tray path, .tray circle { fill: none; stroke: #fff; stroke-width: 1.300; }
.tray .solid { fill: #fff; stroke: none; }
.tray .sun circle { fill: url(#gSun); stroke: none; }
.weather { width: 113px; margin-left: 16px; font-size: 20px; white-space: nowrap; margin-top: 5px; }
.i1 { margin-left: 25.500px; }
.i2 { margin-left: 17.500px; }
.i3 { margin-left: 14px; }
.i4 { margin-left: 15px; }
.i5 { margin-left: 13px; }
.lang { margin-left: 16.500px; width: 34px; font-size: 16.600px; }
.clock { width: 92px; margin-left: 21px; display: flex; flex-direction: column; align-items: center; font-size: 17.550px; line-height: 28px; }
.note { position: relative; margin-left: 29.500px; width: 24px; height: 24px; margin-top: -1px; }
.tray .note path:first-child { fill: #fff; stroke: none; }
.tray .note path + path { stroke: #24333c; }
.note i { position: absolute; left: 11px; top: 12px; width: 25px; height: 25px; border: 1px solid #8b9298; border-radius: 50%; background: #30353a; font-weight: 600; font-size: 16px; line-height: 23px; text-align: center; }
.peek { width: 2px; height: 60px; margin: 0 7px 0 29px; background: #6a747b; }
```
